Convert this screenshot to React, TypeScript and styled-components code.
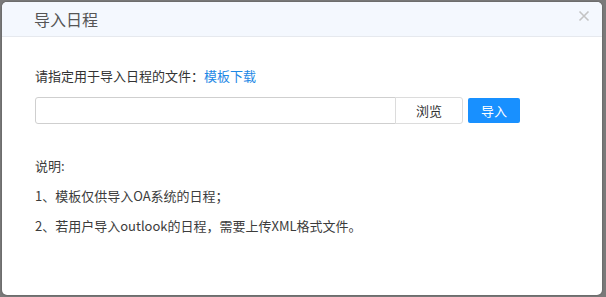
import React from "react";
import styled, { createGlobalStyle } from "styled-components";

const GlobalStyle = createGlobalStyle`
  html, body {
    margin: 0;
    padding: 0;
    background: #7a7a7a;
  }
  body {
    font-family: "Noto Sans CJK SC", "Noto Sans", sans-serif;
  }
`;

const Backdrop = styled.div`
  width: 606px;
  height: 297px;
  padding: 2px 3px 2px 2px;
  box-sizing: border-box;
  background: #7a7a7a;
`;

const Modal = styled.div`
  width: 600px;
  height: 293px;
  background: #fff;
  border-radius: 5px;
  overflow: hidden;
  display: flex;
  flex-direction: column;
  box-shadow: 0 0 2px rgba(0, 0, 0, 0.4);
`;

const Header = styled.div`
  height: 35px;
  box-sizing: border-box;
  background: #f4f8fe;
  border-bottom: 1px solid #e6e9ee;
  display: flex;
  align-items: center;
  justify-content: space-between;
  padding: 0 12px 0 32px;
`;

const Title = styled.span`
  font-size: 16px;
  color: #555;
`;

const Close = styled.button`
  border: none;
  background: none;
  padding: 0;
  width: 12px;
  height: 12px;
  margin-top: -6px;
  cursor: pointer;
  display: flex;
`;

const Body = styled.div`
  padding: 29px 33px 0;
  display: flex;
  flex-direction: column;
  font-size: 13px;
  color: #333;
`;

const Label = styled.div`
  line-height: 20px;
`;

const Link = styled.a`
  color: #1e88e5;
  text-decoration: none;
`;

const FileRow = styled.div`
  display: flex;
  align-items: center;
  margin-top: 11px;
`;

const PathInput = styled.input`
  width: 361px;
  height: 27px;
  box-sizing: border-box;
  border: 1px solid #cfcfcf;
  border-radius: 3px 0 0 3px;
  outline: none;
  padding: 0 6px;
`;

const BrowseButton = styled.button`
  width: 68px;
  height: 27px;
  margin-left: -1px;
  box-sizing: border-box;
  border: 1px solid #dcdcdc;
  border-radius: 0 3px 3px 0;
  background: #fff;
  color: #333;
  font: inherit;
  font-size: 13px;
`;

const PrimaryButton = styled.button`
  width: 52px;
  height: 25px;
  margin-left: 5px;
  border: none;
  border-radius: 2px;
  background: #1890ff;
  color: #fff;
  font: inherit;
  font-size: 13px;
`;

const Notes = styled.div`
  margin-top: 32px;
  display: flex;
  flex-direction: column;
  gap: 11px;
`;

const Note = styled.div`
  line-height: 19px;
  color: #3c3c3c;
`;

export default function App() {
  return (
    <>
      <GlobalStyle />
      <Backdrop>
        <Modal>
          <Header>
            <Title>导入日程</Title>
            <Close aria-label="close">
              <svg width="12" height="12" viewBox="0 0 12 12">
                <path d="M1.5 1.5L10.5 10.5M10.5 1.5L1.5 10.5" stroke="#c4c4c4" strokeWidth="1.6" />
              </svg>
            </Close>
          </Header>
          <Body>
            <Label>
              请指定用于导入日程的文件：<Link href="#">模板下载</Link>
            </Label>
            <FileRow>
              <PathInput type="text" readOnly />
              <BrowseButton>浏览</BrowseButton>
              <PrimaryButton>导入</PrimaryButton>
            </FileRow>
            <Notes>
              <Note>说明:</Note>
              <Note>1、模板仅供导入OA系统的日程；</Note>
              <Note>2、若用户导入outlook的日程，需要上传XML格式文件。</Note>
            </Notes>
          </Body>
        </Modal>
      </Backdrop>
    </>
  );
}
